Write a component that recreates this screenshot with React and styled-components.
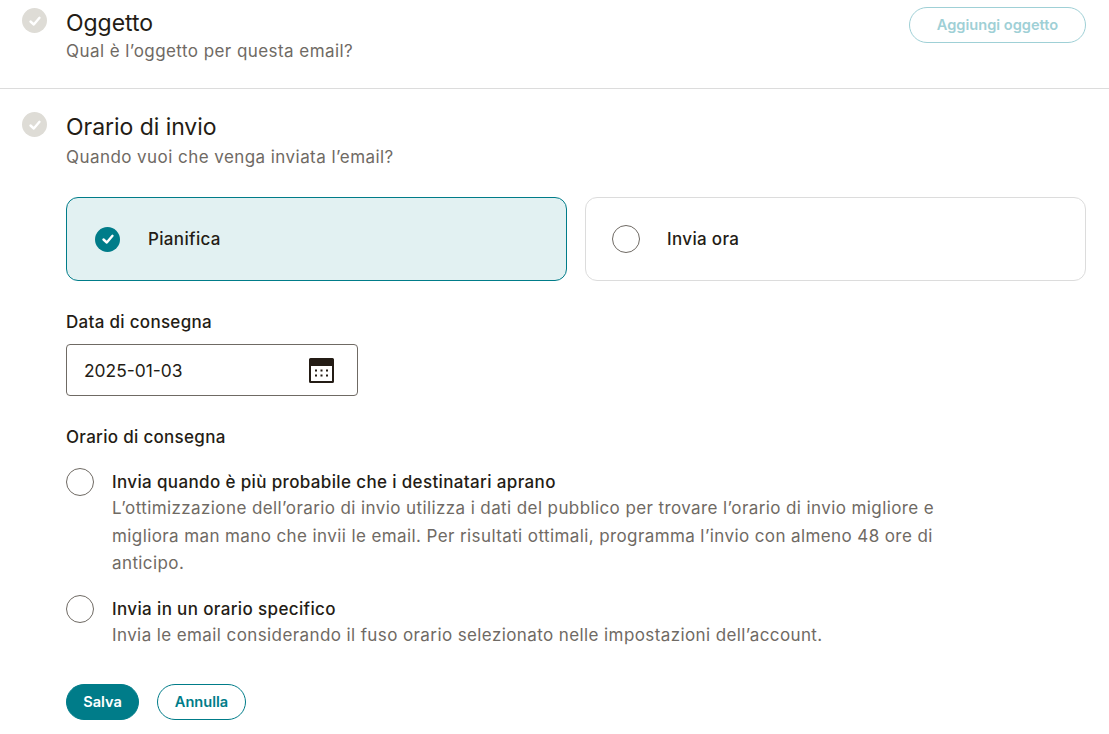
import React from "react";
import styled, { createGlobalStyle } from "styled-components";

const Global = createGlobalStyle`
  html, body { margin: 0; padding: 0; background: #fff; }
  body { font-family: Inter, "Liberation Sans", sans-serif; color: #241c15; }
`;
const Page = styled.div`width: 1109px; height: 734px; overflow: hidden;`;
const Section = styled.section`
  display: flex;
  gap: 19px;
  padding: ${(p) => p.$pad};
  border-bottom: ${(p) => (p.$divider ? "1px solid #dcdcdc" : "none")};
`;
const StepIcon = styled.div`
  flex: none; width: 25px; height: 25px; border-radius: 50%;
  background: #dedcd6; display: flex; align-items: center; justify-content: center;
`;
const Body = styled.div`flex: 1; min-width: 0;`;
const HeadRow = styled.div`display: flex; justify-content: space-between; align-items: flex-start;`;
const Title = styled.h2`
  margin: 0; font-size: 23px; line-height: 30px; font-weight: 400; color: #241c15;
  letter-spacing: -0.05px;
`;
const Sub = styled.p`
  margin: ${(p) => p.$mt}px 0 0; font-size: 17px; line-height: 24px; color: #6f6a64; font-weight: 400;
  letter-spacing: 0.44px;
`;
const Pill = styled.button`
  font-family: inherit; font-size: 14.6px; font-weight: 600; border-radius: 18px; height: 36px;
  padding: 0; background: ${(p) => (p.$solid ? "#007c89" : "#fff")};
  color: ${(p) => (p.$solid ? "#fff" : p.$muted ? "#9fd0d6" : "#007c89")};
  border: 1px solid ${(p) => (p.$muted ? "#9fd0d6" : "#007c89")};
  width: ${(p) => p.$w}px;
  margin-top: ${(p) => p.$mt || 0}px;
`;
const Choices = styled.div`display: grid; grid-template-columns: 1fr 1fr; gap: 18px; margin-top: 28px;`;
const Choice = styled.div`
  height: 84px; box-sizing: border-box; border-radius: 12px; display: flex; align-items: center;
  gap: ${(p) => p.$gap}px; padding-left: ${(p) => p.$pl}px;
  background: ${(p) => (p.$on ? "#e2f1f2" : "#fff")};
  border: 1px solid ${(p) => (p.$on ? "#007c89" : "#dcdcdc")};
`;
const ChoiceLabel = styled.span`font-size: 17px; font-weight: 550; letter-spacing: 0.34px;`;
const CheckDot = styled.span`
  flex: none; width: 25px; height: 25px; border-radius: 50%; background: #007c89;
  display: flex; align-items: center; justify-content: center;
`;
const Radio = styled.span`
  flex: none; width: 28px; height: 28px; box-sizing: border-box; border-radius: 50%;
  border: 1px solid #6f6a64; background: #fff;
`;
const FieldLabel = styled.div`
  font-size: 17px; font-weight: 550; line-height: 24px; letter-spacing: 0.3px;
  margin-top: ${(p) => p.$mt}px;
`;
const DateBox = styled.div`
  margin-top: 10px; width: 292px; height: 52px; box-sizing: border-box;
  border: 1px solid #6f6a64; border-radius: 4px; display: flex; align-items: center;
  justify-content: space-between; padding: 0 23px 0 17px; font-size: 17.4px;
`;
const Options = styled.div`display: flex; flex-direction: column; gap: 17px; margin-top: 19px;`;
const Option = styled.div`display: flex; gap: 18px; align-items: flex-start; max-width: 880px;`;
const OptionText = styled.div`flex: 1; padding-top: 1px;`;
const OptionTitle = styled.div`font-size: 17px; font-weight: 550; line-height: 26px; letter-spacing: 0.36px;`;
const OptionDesc = styled.div`font-size: 17px; line-height: 27.5px; color: #6f6a64; letter-spacing: 0.4px;`;
const Actions = styled.div`display: flex; gap: 18px; margin-top: 35px;`;

const Tick = ({ size = 14, w = 2.4 }) => (
  <svg width={size} height={size} viewBox="0 0 14 14" fill="none" stroke="#fff" strokeWidth={w} strokeLinecap="round" strokeLinejoin="round">
    <path d="M2.5 7.5 5.8 10.5 11.5 3.8" />
  </svg>
);
const Calendar = () => (
  <svg width="25" height="25" viewBox="0 0 25 25">
    <path fill="#241c15" d="M1.5 0h22A1.5 1.5 0 0 1 25 1.5v22a1.5 1.5 0 0 1-1.5 1.5h-22A1.5 1.5 0 0 1 0 23.5v-22A1.5 1.5 0 0 1 1.5 0Z" />
    <rect x="2" y="8" width="21" height="15" fill="#fff" />
    <g fill="#241c15">
      <rect x="6" y="11.5" width="2" height="2" /><rect x="11.5" y="11.5" width="2" height="2" /><rect x="17" y="11.5" width="2" height="2" />
      <rect x="6" y="16.5" width="2" height="2" /><rect x="11.5" y="16.5" width="2" height="2" /><rect x="17" y="16.5" width="2" height="2" />
    </g>
  </svg>
);

export default function App() {
  return (
    <Page>
      <Global />
      <Section $pad="8px 23px 25px 22px" $divider>
        <StepIcon><Tick /></StepIcon>
        <Body>
          <HeadRow>
            <div>
              <Title>Oggetto</Title>
              <Sub $mt={1}>Qual è l’oggetto per questa email?</Sub>
            </div>
            <Pill $muted $w={177} $mt={-1}>Aggiungi oggetto</Pill>
          </HeadRow>
        </Body>
      </Section>
      <Section $pad="23px 23px 0 22px">
        <StepIcon><Tick /></StepIcon>
        <Body>
          <Title>Orario di invio</Title>
          <Sub $mt={3}>Quando vuoi che venga inviata l’email?</Sub>
          <Choices>
            <Choice $on $gap={28} $pl={28}>
              <CheckDot><Tick /></CheckDot>
              <ChoiceLabel>Pianifica</ChoiceLabel>
            </Choice>
            <Choice $gap={27} $pl={26}>
              <Radio />
              <ChoiceLabel>Invia ora</ChoiceLabel>
            </Choice>
          </Choices>
          <FieldLabel $mt={29}>Data di consegna</FieldLabel>
          <DateBox>2025-01-03<Calendar /></DateBox>
          <FieldLabel $mt={29}>Orario di consegna</FieldLabel>
          <Options>
            <Option>
              <Radio />
              <OptionText>
                <OptionTitle>Invia quando è più probabile che i destinatari aprano</OptionTitle>
                <OptionDesc>L’ottimizzazione dell’orario di invio utilizza i dati del pubblico per trovare l’orario di invio migliore e migliora man mano che invii le email. Per risultati ottimali, programma l’invio con almeno 48 ore di anticipo.</OptionDesc>
              </OptionText>
            </Option>
            <Option>
              <Radio />
              <OptionText>
                <OptionTitle>Invia in un orario specifico</OptionTitle>
                <OptionDesc>Invia le email considerando il fuso orario selezionato nelle impostazioni dell’account.</OptionDesc>
              </OptionText>
            </Option>
          </Options>
          <Actions>
            <Pill $solid $w={73}>Salva</Pill>
            <Pill $w={89}>Annulla</Pill>
          </Actions>
        </Body>
      </Section>
    </Page>
  );
}
